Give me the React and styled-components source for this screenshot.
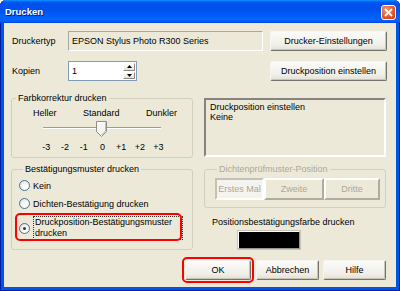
import styled, { createGlobalStyle } from "styled-components";

const Global = createGlobalStyle`
  html, body { margin: 0; padding: 0; background: #fff; }
  body { font-family: "Liberation Sans", Arial, sans-serif; font-size: 9px; color: #000; }
  * { box-sizing: border-box; }
`;

const Window = styled.div`
  width: 400px;
  height: 291px;
  display: flex;
  flex-direction: column;
  background: #0054e3;
  border-radius: 6px 6px 0 0;
  overflow: hidden;
  padding: 0 4px 4px;
  box-shadow: inset 1px 0 0 #001ea0, inset -1px 0 0 #001ea0, inset 0 -1px 0 #001ea0;
`;

const TitleBar = styled.div`
  height: 23px;
  flex: none;
  margin: 0 -4px;
  padding: 0 4px 0 5px;
  display: flex;
  align-items: center;
  justify-content: space-between;
  background: linear-gradient(
    to bottom,
    #0997ff 0%,
    #0053ee 10%,
    #0050ee 40%,
    #0066ff 86%,
    #005bff 93%,
    #003dd7 100%
  );
`;

const Title = styled.span`
  color: #fff;
  font-weight: bold;
  font-size: 9.5px;
  text-shadow: 1px 1px 0 #0a1883;
`;

const CloseBtn = styled.div`
  width: 15px;
  height: 15px;
  margin-top: 1px;
  border: 1px solid #fff;
  border-radius: 3px;
  background: radial-gradient(circle at 35% 30%, #f09878 0%, #e35a2e 55%, #c4381a 100%);
  display: flex;
  align-items: center;
  justify-content: center;
`;

const Body = styled.div`
  flex: 1;
  background: #ece9d8;
  padding: 8px 9px 0 7px;
  display: flex;
  flex-direction: column;
`;

const Row = styled.div`
  display: flex;
  align-items: ${(p) => p.$align || "center"};
  margin-top: ${(p) => p.$top || 0}px;
`;

const Label = styled.div`
  width: 57px;
  padding-left: 1px;
  flex: none;
`;

const Field = styled.div`
  width: ${(p) => p.$w}px;
  height: 20px;
  display: flex;
  align-items: center;
  padding-left: 3px;
  background: ${(p) => (p.$white ? "#fff" : "#ece9d8")};
  border: 1px solid;
  border-color: ${(p) => (p.$white ? "#7f9db9" : "#a7a6aa #fff #fff #a7a6aa")};
  position: relative;
`;

const Spin = styled.div`
  position: absolute;
  right: 1px;
  top: 1px;
  bottom: 1px;
  width: 12px;
  display: flex;
  flex-direction: column;
  gap: 1px;
`;

const SpinHalf = styled.div`
  flex: 1;
  background: linear-gradient(#fdfdfb, #e6e3d8);
  border: 1px solid;
  border-color: #fff #8d8b83 #8d8b83 #fff;
  display: flex;
  align-items: center;
  justify-content: center;
`;

const Button = styled.button`
  width: ${(p) => p.$w}px;
  height: 20px;
  flex: none;
  margin-left: ${(p) => p.$ml || 0}px;
  font-family: inherit;
  font-size: 9px;
  color: #000;
  padding: 0;
  border: 1px solid;
  border-color: #f6f5f0 #74726a #74726a #f6f5f0;
  box-shadow: inset -1px -1px 0 #c9c5b6;
  border-radius: 2px;
  background: linear-gradient(#fbfbf9, #f0efe8 70%, #e4e1d5);
`;

const Spacer = styled.div`
  flex: 1;
`;

const Group = styled.fieldset`
  width: 182px;
  min-width: 0;
  height: ${(p) => p.$h}px;
  margin: 0;
  padding: 0 0 0 ${(p) => p.$pl || 0}px;
  border: 1px solid #d0d0bf;
  border-radius: 3px;
  flex: none;
  color: ${(p) => (p.$disabled ? "#aca899" : "#000")};
  & > legend {
    padding: 0 2px;
    margin-left: 4px;
    font-size: 9px;
    line-height: 10px;
  }
`;

const Scale = styled.div`
  display: flex;
  justify-content: space-between;
  padding: 5px 15px 0 21px;
`;

const SliderTrack = styled.div`
  position: relative;
  margin: 9px 0 0 31px;
  width: 118px;
  height: 2px;
  border-top: 1px solid #9d9c99;
  border-bottom: 1px solid #fff;
`;

const Thumb = styled.svg`
  position: absolute;
  left: 53px;
  top: -7px;
`;

const Ticks = styled.div`
  display: grid;
  grid-template-columns: repeat(7, 18.7px);
  margin: 13px 0 0 25px;
  & > span { text-align: center; }
`;

const InfoBox = styled.div`
  width: 182px;
  height: 59px;
  margin-top: 5px;
  margin-left: 11px;
  padding: 2px 4px;
  line-height: 10px;
  border: 2px solid;
  border-color: #858480 #fff #fff #858480;
`;

const Radio = styled.div`
  display: flex;
  align-items: center;
  gap: 3px;
  margin-top: ${(p) => p.$top || 0}px;
  position: relative;
`;

const RadioDot = styled.span`
  width: 11px;
  height: 11px;
  flex: none;
  border-radius: 50%;
  border: 1px solid #4a7196;
  background: radial-gradient(circle at 65% 65%, #fff 20%, #dcd9cd 100%);
  display: flex;
  align-items: center;
  justify-content: center;
  &::after {
    content: "";
    width: 3px;
    height: 3px;
    border-radius: 50%;
    background: ${(p) => (p.$on ? "#1f3f5f" : "transparent")};
  }
`;

const Focus = styled.span`
  border: 1px dotted #333;
  padding: 0 1px;
  line-height: 11px;
  width: 150px;
`;

const Highlight = styled.div`
  position: absolute;
  left: -4px;
  top: -3px;
  width: 167px;
  height: 28px;
  border: 2px solid #ff0000;
  border-radius: 5px;
`;

const Column = styled.div`
  display: flex;
  flex-direction: column;
  margin-left: 11px;
`;

const Segments = styled.div`
  display: flex;
  margin: 4px 0 0 2px;
`;

const Segment = styled.div`
  width: ${(p) => p.$w}px;
  height: 22px;
  display: flex;
  align-items: center;
  justify-content: center;
  color: #aca899;
  border: 2px solid;
  border-color: ${(p) =>
    p.$pressed ? "#c4c1b4 #fff #fff #c4c1b4" : "#fff #b0ad9f #b0ad9f #fff"};
  background: ${(p) => (p.$pressed ? "#f4f3ee" : "#ece9d8")};
`;

const ColorLabel = styled.div`
  margin: 9px 0 0 8px;
`;

const Swatch = styled.div`
  width: 62px;
  height: 18px;
  margin: 4px 0 0 34px;
  background: #000;
  border: 1px solid;
  border-color: #fff #9a9890 #9a9890 #fff;
  box-shadow: 0 0 0 1px #c8c5b8;
`;

const Footer = styled.div`
  display: flex;
  justify-content: flex-end;
  margin-top: 10px;
  padding-right: 1px;
`;

const Marked = styled.div`
  position: relative;
  &::after {
    content: "";
    position: absolute;
    inset: -3px;
    border: 2px solid #ff0000;
    border-radius: 5px;
  }
`;

const Up = () => (
  <svg width="5" height="3" viewBox="0 0 5 3">
    <path d="M2.5 0 L5 3 L0 3 Z" fill="#000" />
  </svg>
);

const Down = () => (
  <svg width="5" height="3" viewBox="0 0 5 3">
    <path d="M0 0 L5 0 L2.5 3 Z" fill="#000" />
  </svg>
);

export default function App() {
  const ticks = ["-3", "-2", "-1", "0", "+1", "+2", "+3"];
  return (
    <>
      <Global />
      <Window>
        <TitleBar>
          <Title>Drucken</Title>
          <CloseBtn>
            <svg width="9" height="9" viewBox="0 0 9 9">
              <path d="M1 1 L8 8 M8 1 L1 8" stroke="#fff" strokeWidth="1.8" />
            </svg>
          </CloseBtn>
        </TitleBar>
        <Body>
          <Row>
            <Label>Druckertyp</Label>
            <Field $w={195}>EPSON Stylus Photo R300 Series</Field>
            <Button $w={117} $ml={7}>Drucker-Einstellungen</Button>
          </Row>
          <Row $top={10}>
            <Label>Kopien</Label>
            <Field $w={69} $white>
              1
              <Spin>
                <SpinHalf><Up /></SpinHalf>
                <SpinHalf><Down /></SpinHalf>
              </Spin>
            </Field>
            <Spacer />
            <Button $w={117}>Druckposition einstellen</Button>
          </Row>
          <Row $top={12} $align="flex-start">
            <Group $h={65}>
              <legend>Farbkorrektur drucken</legend>
              <Scale>
                <span>Heller</span>
                <span>Standard</span>
                <span>Dunkler</span>
              </Scale>
              <SliderTrack>
                <Thumb width="11" height="16" viewBox="0 0 11 16">
                  <path
                    d="M0.5 0.5 H10.5 V10.5 L5.5 15.5 L0.5 10.5 Z"
                    fill="#f6f5ef"
                    stroke="#8e8d88"
                  />
                  <path d="M1.5 1.5 H9.5" stroke="#fff" />
                  <path d="M9.5 1.5 V10 L5.5 14" stroke="#b8b6ad" fill="none" />
                </Thumb>
              </SliderTrack>
              <Ticks>
                {ticks.map((t) => (
                  <span key={t}>{t}</span>
                ))}
              </Ticks>
            </Group>
            <InfoBox>
              Druckposition einstellen
              <br />
              Keine
            </InfoBox>
          </Row>
          <Row $top={6} $align="flex-start">
            <Group $h={86} $pl={7}>
              <legend>Bestätigungsmuster drucken</legend>
              <Radio $top={6}>
                <RadioDot />
                <span>Kein</span>
              </Radio>
              <Radio $top={7}>
                <RadioDot />
                <span>Dichten-Bestätigung drucken</span>
              </Radio>
              <Radio $top={7}>
                <Highlight />
                <RadioDot $on />
                <Focus>
                  Druckposition-Bestätigungsmuster
                  <br />
                  drucken
                </Focus>
              </Radio>
            </Group>
            <Column>
              <Group $h={44} $pl={8} $disabled>
                <legend>Dichtenprüfmuster-Position</legend>
                <Segments>
                  <Segment $w={49} $pressed>Erstes Mal</Segment>
                  <Segment $w={60}>Zweite</Segment>
                  <Segment $w={56}>Dritte</Segment>
                </Segments>
              </Group>
              <ColorLabel>Positionsbestätigungsfarbe drucken</ColorLabel>
              <Swatch />
            </Column>
          </Row>
          <Footer>
            <Marked>
              <Button $w={66}>OK</Button>
            </Marked>
            <Button $w={63} $ml={5}>Abbrechen</Button>
            <Button $w={63} $ml={4}>Hilfe</Button>
          </Footer>
        </Body>
      </Window>
    </>
  );
}
